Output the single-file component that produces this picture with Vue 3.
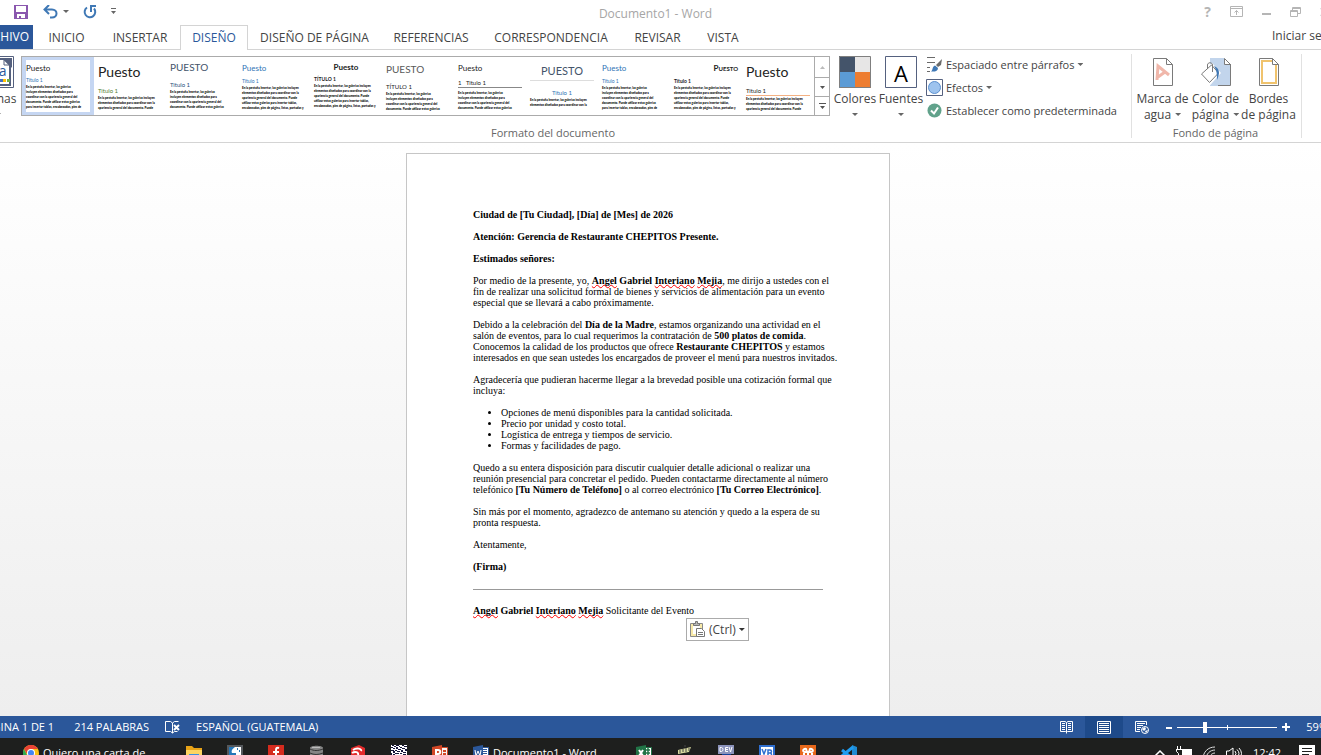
<script setup>
import { ref } from 'vue'

const tabs = ['INICIO', 'INSERTAR', 'DISEÑO', 'DISEÑO DE PÁGINA', 'REFERENCIAS', 'CORRESPONDENCIA', 'REVISAR', 'VISTA']
const activeTab = ref('DISEÑO')
const zoom = ref(27)

const wide = [
  'En la pestaña Insertar, las galerías',
  'incluyen elementos diseñados para',
  'coordinar con la apariencia general del',
  'documento. Puede utilizar estas galerías',
  'para insertar tablas, encabezados, pies de',
]
const loose = [
  'En la pestaña Insertar, las galerías incluyen',
  'elementos diseñados para coordinar con la',
  'apariencia general del documento. Puede',
  'utilizar estas galerías para insertar tablas,',
  'encabezados, pies de página, listas, portadas y',
]
const styleSets = [
  { id: 'a', title: 'Puesto', heading: 'Título 1', lines: wide },
  { id: 'b', title: 'Puesto', heading: 'Título 1', lines: loose.slice(0, 3) },
  { id: 'c', title: 'PUESTO', heading: 'Título 1', lines: wide.slice(0, 4) },
  { id: 'd', title: 'Puesto', heading: 'Título 1', lines: loose },
  { id: 'e', title: 'Puesto', heading: 'TÍTULO 1', lines: loose },
  { id: 'f', title: 'PUESTO', heading: 'TÍTULO 1', lines: wide.slice(0, 4) },
  { id: 'g', title: 'Puesto', heading: '1   Título 1', lines: wide.slice(0, 4) },
  { id: 'h', title: 'PUESTO', heading: 'Título 1', lines: loose.slice(0, 2) },
  { id: 'i', title: 'Puesto', heading: 'Título 1', lines: wide },
  { id: 'j', title: 'Puesto', heading: 'Título 1', lines: loose },
  { id: 'k', title: 'Puesto', heading: 'Título 1', lines: loose.slice(0, 3) },
]
const selectedSet = ref('a')
</script>

<template>
  <div class="app">
    <header class="titlebar">
      <div class="quick">
        <button class="ico" aria-label="Guardar">
          <svg width="14" height="14" viewBox="0 0 14 14"><path fill="#8a57ae" fill-rule="evenodd" d="M0 0h14v14H0zM2 1v6h10V1zM3 9v4h2v-2h2v2h4V9z" /></svg>
        </button>
        <button class="ico undo" aria-label="Deshacer">
          <svg width="15" height="14" viewBox="0 0 15 14"><path fill="none" stroke="#3f78b5" stroke-width="2" d="M6 0 1.500 4.500 6 9M2 4.500h7c6 0 6 8 0 8H7" /></svg>
        </button>
        <button class="ico" aria-label="Opciones de deshacer"><span class="caret"></span></button>
        <button class="ico redo" aria-label="Repetir">
          <svg width="14" height="14" viewBox="0 0 14 14"><path fill="none" stroke="#3f78b5" stroke-width="2" d="M4 2.500A5.300 5.300 0 1 0 11 3.500M7 1h6M8 0v7" /></svg>
        </button>
        <button class="ico custom" aria-label="Personalizar">
          <svg width="7" height="7" viewBox="0 0 7 7"><path fill="#666" d="M1 0h5v1H1zM1 3h5L3.500 6z" /></svg>
        </button>
      </div>
      <div class="doc-title">Documento1 - Word</div>
      <div class="window-tools">
        <button class="ico help" aria-label="Ayuda">?</button>
        <button class="ico" aria-label="Opciones de la cinta">
          <svg width="13" height="11" viewBox="0 0 13 11"><path fill="none" stroke="#b5b5b5" d="M.5.5h12v10H.5zM.5 2.500h12M6.500 9V4.500M4.500 6.500l2-2 2 2" /></svg>
        </button>
        <button class="ico" aria-label="Minimizar"><svg width="9" height="10" viewBox="0 0 9 10"><path fill="#b5b5b5" d="M0 6h9v2H0z" /></svg></button>
        <button class="ico" aria-label="Restaurar">
          <svg width="11" height="10" viewBox="0 0 11 10"><path fill="none" stroke="#b5b5b5" d="M.5 3.500h7v6h-7zM2.500 3V.5h8v6H8M.5 4.500h7M2.500 1.500h8" /></svg>
        </button>
        <button class="ico" aria-label="Cerrar"><svg width="10" height="10" viewBox="0 0 10 10"><path stroke="#b5b5b5" stroke-width="2" d="m1 1 8 8M9 1 1 9" /></svg></button>
      </div>
    </header>

    <nav class="tabs">
      <button class="tab file">ARCHIVO</button>
      <button v-for="t in tabs" :key="t" class="tab" :class="{ active: t === activeTab }" @click="activeTab = t">{{ t }}</button>
      <a class="signin" href="#">Iniciar sesión</a>
    </nav>

    <section class="ribbon">
      <div class="group format">
        <div class="group-body">
          <button class="big themes">
            <svg width="32" height="32" viewBox="0 0 32 32">
              <path fill="#fff" stroke="#55617f" stroke-width="1" d="M.5.5h31v31H.5z" />
              <path fill="#55617f" d="M21 2h9v10z" />
              <path fill="#fff" stroke="#55617f" stroke-width="2" d="M3 3h19l6 6v20H3z" />
              <path fill="none" stroke="#55617f" d="M22 3v6h6" />
              <path fill="#5b9bd5" d="M14 23h3v3h-3z" /><path fill="#4472c4" d="M18 23h3v3h-3z" /><path fill="#ffc000" d="M21 23h3v3h-3z" /><path fill="#70ad47" d="M25 23h3v3h-3z" />
              <text x="8" y="20" class="svg-aa">Aa</text>
            </svg>
            <span>Temas</span><i class="caret"></i>
          </button>
          <div class="gallery">
            <button v-for="s in styleSets" :key="s.id" class="thumb" :class="['set-' + s.id, { selected: s.id === selectedSet }]" @click="selectedSet = s.id">
              <span class="sheet">
                <b class="t">{{ s.title }}</b>
                <b class="h">{{ s.heading }}</b>
                <span class="p"><span v-for="l in s.lines" :key="l">{{ l }}</span></span>
              </span>
            </button>
            <div class="scroller">
              <button class="off" aria-label="Arriba"><svg width="5" height="3"><path d="M0 3h5L2.500 0z" /></svg></button>
              <button aria-label="Abajo"><svg width="5" height="3"><path d="M0 0h5L2.500 3z" /></svg></button>
              <button aria-label="Más"><svg width="7" height="7"><path d="M0 0h7v1H0zM1 3h5L3.500 6z" /></svg></button>
            </div>
          </div>
          <button class="big colors">
            <svg width="32" height="32" viewBox="0 0 32 32"><path fill="#44546a" d="M0 0h16v16H0z" /><path fill="#e7e6e6" d="M16 0h16v16H16z" /><path fill="#5b9bd5" d="M0 16h16v16H0z" /><path fill="#ed7d31" d="M16 16h16v16H16z" /><path fill="none" stroke="#7f7f7f" d="M.5.5h31v31H.5z" /></svg>
            <span>Colores</span><i class="caret"></i>
          </button>
          <button class="big fonts">
            <svg width="32" height="32" viewBox="0 0 32 32"><path fill="#fff" stroke="#55617f" d="M.5.5h31v31H.5z" /><text x="16" y="26" text-anchor="middle" class="svg-a">A</text></svg>
            <span>Fuentes</span><i class="caret"></i>
          </button>
          <div class="small-list">
            <button class="small">
              <svg width="17" height="17" viewBox="0 0 17 17"><path stroke="#6a6a6a" d="M1 1.500h8M1 6.500h8M1 11.500h3M1 15.500h3" /><path fill="#6b6b6b" d="m16 3-1 6-3 2-2-2z" /><path fill="#3f78b5" d="M9 9.500 12 12c0 3-3 4-7 3.500 2-1 1-5 4-6z" /></svg>
              Espaciado entre párrafos<i class="caret"></i>
            </button>
            <button class="small">
              <svg width="17" height="17" viewBox="0 0 17 17"><path fill="#fff" stroke="#55617f" d="M.5.5h16v16H.5z" /><circle cx="8.500" cy="8.500" r="6" fill="#9dc3ee" stroke="#5b8fce" /></svg>
              Efectos<i class="caret"></i>
            </button>
            <button class="small">
              <svg width="17" height="17" viewBox="0 0 17 17"><circle cx="8.500" cy="8.500" r="7" fill="#61a28b" /><path fill="none" stroke="#fff" stroke-width="2" d="m5 8.500 3 3 4-6" /></svg>
              Establecer como predeterminada
            </button>
          </div>
        </div>
        <div class="group-label">Formato del documento</div>
      </div>
      <div class="group background">
        <div class="group-body">
          <button class="big page">
            <svg width="24" height="30" viewBox="0 0 24 30"><path fill="#fff" stroke="#7a7a7a" d="M2.500 1.500h13l6 6v21h-19zM15.500 1.500v6h6" /><path fill="none" stroke="#f0b7aa" stroke-width="3" d="M6 23 7 9l11 9M7 20l7-5" /></svg>
            <span>Marca de</span><span>agua<i class="caret"></i></span>
          </button>
          <button class="big page">
            <svg width="32" height="30" viewBox="0 0 32 30"><path fill="#c2d5ec" d="M10 1h14l6 6v22H10z" /><path fill="#fff" stroke="#7a7a7a" d="M24.500 1.500v6h6z" /><path fill="none" stroke="#7a7a7a" d="M30.500 7v21.500H18" /><path fill="#fff" stroke="#fff" stroke-width="3" d="m1 17 11-9 7 8-9 10z" /><path fill="#fff" stroke="#7a7a7a" d="m1.500 17 10-9 7 8-9 9.500z" /><path fill="none" stroke="#7a7a7a" d="M7.500 12V8c0-3 5-3 5 0v7" /><path fill="#3f78b5" d="M14 9c6 2 6 8 3 14 0-6 0-9-3-14z" /></svg>
            <span>Color de</span><span>página<i class="caret"></i></span>
          </button>
          <button class="big page">
            <svg width="24" height="30" viewBox="0 0 24 30"><path fill="#fff" stroke="#7a7a7a" d="M2.500 1.500h13l6 6v21h-19z" /><path fill="none" stroke="#f0c36d" stroke-width="2" d="M5 4h11l3 4v18H5z" /><path fill="#fff" stroke="#7a7a7a" d="M15.500 1.500v6h6z" /></svg>
            <span>Bordes</span><span>de página</span>
          </button>
        </div>
        <div class="group-label">Fondo de página</div>
      </div>
    </section>

    <main class="canvas">
      <article class="page-sheet">
        <p><b>Ciudad de [Tu Ciudad], [Día] de [Mes] de 2026</b></p>
        <p><b>Atención: Gerencia de Restaurante CHEPITOS Presente.</b></p>
        <p><b>Estimados señores:</b></p>
        <p>Por medio de la presente, yo, <b><u>Angel</u> Gabriel <u>Interiano</u> <u>Mejia</u></b>, me dirijo a ustedes con el<br>fin de realizar una solicitud formal de bienes y servicios de alimentación para un evento<br>especial que se llevará a cabo próximamente.</p>
        <p>Debido a la celebración del <b>Día de la Madre</b>, estamos organizando una actividad en el<br>salón de eventos, para lo cual requerimos la contratación de <b>500 platos de comida</b>.<br>Conocemos la calidad de los productos que ofrece <b>Restaurante CHEPITOS</b> y estamos<br>interesados en que sean ustedes los encargados de proveer el menú para nuestros invitados.</p>
        <p>Agradecería que pudieran hacerme llegar a la brevedad posible una cotización formal que<br>incluya:</p>
        <ul>
          <li>Opciones de menú disponibles para la cantidad solicitada.</li>
          <li>Precio por unidad y costo total.</li>
          <li>Logística de entrega y tiempos de servicio.</li>
          <li>Formas y facilidades de pago.</li>
        </ul>
        <p>Quedo a su entera disposición para discutir cualquier detalle adicional o realizar una<br>reunión presencial para concretar el pedido. Pueden contactarme directamente al número<br>telefónico <b>[Tu Número de Teléfono]</b> o al correo electrónico <b>[Tu Correo Electrónico]</b>.</p>
        <p>Sin más por el momento, agradezco de antemano su atención y quedo a la espera de su<br>pronta respuesta.</p>
        <p>Atentamente,</p>
        <p><b>(Firma)</b></p>
        <hr>
        <p><b><u>Angel</u> Gabriel <u>Interiano</u> <u>Mejia</u></b> Solicitante del Evento</p>
        <button class="paste">
          <svg width="16" height="17" viewBox="0 0 16 17"><path fill="#f7e9a8" stroke="#8a8a8a" d="M.5 2.500h12v13H.5z" /><path fill="#fff" d="M3 5h7v8H3z" /><path fill="#b9b9b9" stroke="#777" d="M3.500 4.500v-2h2v-2h2v2h2v2z" /><path fill="#fff" stroke="#777" d="M6.500 7.500h5l3 3v5h-8zM8 11.500h5M8 13.500h5" /></svg>
          (Ctrl)<i class="caret dark"></i>
        </button>
      </article>
    </main>

    <footer class="status">
      <div class="status-left">
        <button class="st page-no">PÁGINA 1 DE 1</button>
        <button class="st words">214 PALABRAS</button>
        <button class="st proof" aria-label="Revisión">
          <svg width="15" height="13" viewBox="0 0 15 13"><path fill="none" stroke="#fff" d="M7.500 12V2L5.500.5h-5v10h5l2 1.500 2-1.500h3M7.500 2l2-1.500h4" /><path stroke="#fff" stroke-width="2" d="m9 4 5 5M14 4 9 9" /></svg>
        </button>
        <button class="st">ESPAÑOL (GUATEMALA)</button>
      </div>
      <div class="status-right">
        <button class="view" aria-label="Modo de lectura"><svg width="13" height="13" viewBox="0 0 13 13"><path fill="none" stroke="#fff" d="M6.500 12.500V2L5.500.5h-5v10h5l1 1 1-1h5V.5h-5L6.500 2M2 2.500h3M2 4.500h3M2 6.500h3M2 8.500h3M8 2.500h3M8 4.500h3M8 6.500h3M8 8.500h3" /></svg></button>
        <button class="view on" aria-label="Diseño de impresión"><svg width="14" height="13" viewBox="0 0 14 13"><path fill="none" stroke="#fff" d="M.5.5h13v12H.5zM2 2.500h10M2 4.500h10M2 6.500h10M2 8.500h10M2 10.500h10" /></svg></button>
        <button class="view" aria-label="Diseño web"><svg width="14" height="13" viewBox="0 0 14 13"><path fill="none" stroke="#fff" d="M5 10.500H.5V.5h11V4M2 2.500h8M2 4.500h6M2 6.500h4M2 8.500h3" /><circle cx="10" cy="9" r="3.500" fill="#2b579a" stroke="#fff" /><path fill="#fff" d="m7 8 3-2 1 2-2 2zM10 10l3-1-2 3z" /></svg></button>
        <button class="zoom-step" aria-label="Alejar"><svg width="7" height="7"><path fill="#fff" d="M0 3h6v2H0z" /></svg></button>
        <input v-model="zoom" class="slider" type="range" min="0" max="100" aria-label="Zoom">
        <button class="zoom-step" aria-label="Acercar"><svg width="8" height="8"><path fill="#fff" d="M3 0h2v3h3v2H5v3H3V5H0V3h3z" /></svg></button>
        <button class="st percent">59%</button>
      </div>
    </footer>

    <div class="taskbar">
      <div class="task-row">
        <button class="task chrome">
          <svg width="16" height="16" viewBox="0 0 16 16"><circle cx="8" cy="8" r="8" fill="#fbc116" /><path fill="#ea4335" d="M1 4a8 8 0 0 1 14 0H8a4 4 0 0 0-4 5z" /><path fill="#34a853" d="M1 4a8 8 0 0 0 6 12l4-6-7 0z" /><circle cx="8" cy="8" r="4" fill="#fff" /><circle cx="8" cy="8" r="3" fill="#4285f4" /></svg>
          Quiero una carta de
        </button>
        <button class="task" aria-label="Explorador"><svg width="16" height="16"><path fill="#e8a317" d="M0 1h6l2 2h8v4H0z" /><path fill="#fcd462" d="M0 5h16v11H0z" /><path fill="#3b8ede" d="M3 9h10v7H3z" /></svg></button>
        <button class="task" aria-label="Imagen"><svg width="16" height="16"><path fill="#55585c" d="M0 0h16v16H0z" /><path fill="#fff" d="M2 2h12v12H2z" /><path fill="#2677b8" d="M2 2h6C5 4 4 6 5 8h4v6H2zM10 3h1v2h-1zM12 5h1v2h-1z" /></svg></button>
        <button class="task" aria-label="Flash"><svg width="16" height="16"><path fill="#d52b1e" d="M0 0h16v16H0z" /><path fill="none" stroke="#fff" stroke-width="2" d="M11 3C8 2 8 4 8 6v8M5 7h6" /></svg></button>
        <button class="task" aria-label="Base de datos"><svg width="16" height="16"><path fill="#858585" d="M1 3c0-3 13-3 13 0v12H1z" /><path fill="none" stroke="#333" d="M1 4c4 2 8 2 13 0M1 8c4 2 8 2 13 0" /><path stroke="#bbb" d="M3 2.500h8" /></svg></button>
        <button class="task" aria-label="SketchUp"><svg width="16" height="16"><path fill="#e22b2b" d="m1 3 8-3 6 3v9l-7 4-7-4z" /><path fill="none" stroke="#fff" stroke-width="2" d="M3 5c4-3 9-1 8 1M2 8c3-2 7-1 6 2" /></svg></button>
        <button class="task" aria-label="Código"><svg width="16" height="16"><path fill="#fff" d="M0 0h16v16H0z" /><path fill="#16163a" d="M1 0h2v1H1zM5 0h3v1H5zM11 0h2v1h-2zM3 1h2v1H3zM8 1h1v1H8zM13 1h3v1h-3zM0 2h2v1H0zM5 2h2v2H5zM9 2h2v1H9zM2 3h2v1H2zM11 3h3v1h-3zM7 4h3v1H7zM0 5h3v1H0zM4 5h2v1H4zM10 5h2v2h-2zM14 4h2v2h-2zM2 6h2v2H2zM6 6h3v1H6zM12 7h3v1h-3zM0 8h1v2H0zM4 8h4v1H4zM9 8h2v1H9zM2 9h2v1H2zM12 9h3v2h-3z" /></svg></button>
        <button class="task" aria-label="PowerPoint"><svg width="16" height="16"><path fill="#f5f5f5" stroke="#d24726" d="M8 2.500h7.500v11H8z" /><path fill="#d24726" d="m0 2 10-2v16L0 14zM11 5h3v2h-3zM11 8h3v2h-3z" /><path fill="none" stroke="#fff" stroke-width="2" d="M4 12V5h2c3 0 3 4 0 4H4" /></svg></button>
        <button class="task word">
          <svg width="16" height="16"><path fill="#fff" stroke="#2b579a" d="M8 2.500h7.500v11H8z" /><path fill="#2b579a" d="m0 2 10-2v16L0 14z" /><path stroke="#2b579a" d="M10 4.500h4M10 6.500h4M10 8.500h4M10 10.500h4" /><path fill="none" stroke="#fff" d="m2 5 1 6L5 6l2 5 1-6" /></svg>
          Documento1 - Word
        </button>
        <button class="task" aria-label="Excel"><svg width="16" height="16"><path fill="#fff" stroke="#217346" d="M8 2.500h7.500v11H8z" /><path fill="#217346" d="m0 2 10-2v16L0 14z" /><path stroke="#217346" stroke-width="1.500" d="M10 5h4M10 8h4M10 11h4M12 3v10" /><path stroke="#fff" stroke-width="2" d="m3 5 4 6M7 5l-4 6" /></svg></button>
        <button class="task" aria-label="Editor"><svg width="16" height="16"><path fill="#d9dba0" d="m1 5 13-3-2 5-11 2z" /><path stroke="#444" d="M3 5v3M6 4v3M9 3v4M12 3v3M8 0v2" /><path fill="#7f8250" d="M3 10h9v3H3z" /></svg></button>
        <button class="task" aria-label="Dev"><svg width="16" height="16"><path fill="#8c93bb" d="M0 0h16v9H0z" /><path fill="#16439c" d="M4 9h9v7H4z" /><path fill="none" stroke="#fff" d="M2 2.500v4h1.500c2 0 2-4 0-4zM10 2.500H7.500v4H10M7.500 4.500H10M11 2l1.500 5L14 2" /></svg></button>
        <button class="task" aria-label="Visual Basic"><svg width="16" height="16"><path fill="#fff" stroke="#2f6fd0" stroke-width="2" d="M1 1h14v14H1z" /><path fill="none" stroke="#2f6fd0" stroke-width="1.500" d="m3 4 2 5 2-5M9 5v6h2c2 0 2-3 0-3H9h2c2 0 2-3 0-3z" /></svg></button>
        <button class="task" aria-label="XAMPP"><svg width="16" height="16"><path fill="#e8681a" d="M0 0h16v16H0z" /><path fill="none" stroke="#fff" stroke-width="2" d="M5 7C2 7 3 3 6 4l1 3h2l1-3c3-1 4 3 1 3H5M4 8v5M12 8v5M8 8v4" /></svg></button>
        <button class="task" aria-label="Visual Studio Code"><svg width="16" height="16"><path fill="#1f8ad2" d="m11 0 5 2v12l-5 2z" /><path fill="none" stroke="#1f9cf0" stroke-width="3" d="M12 2 1 11M1 5l11 9" /></svg></button>
        <div class="tray">
          <button class="tr" aria-label="Iconos ocultos"><svg width="12" height="8"><path fill="none" stroke="#fff" stroke-width="1.500" d="m1 7 5-5 5 5" /></svg></button>
          <button class="tr" aria-label="Batería"><svg width="16" height="14"><path fill="#fff" d="M6 3h10v9H4V9h2z" /><path fill="none" stroke="#fff" d="M1.500 0v3M4.500 0v3M0 3.500h6M.5 3.500v2l2 2v4h3" /></svg></button>
          <button class="tr" aria-label="Red"><svg width="14" height="14"><path fill="none" stroke="#ddd" d="M1 13C1 6 6 1 13 1M4 13c0-5 4-9 9-9M7 13c0-3 3-6 6-6" /></svg></button>
          <button class="tr" aria-label="Volumen"><svg width="17" height="14"><path fill="none" stroke="#fff" d="M.5 5v5H3l4 3V2L3 5zM9 5q2 2.500 0 5M11 3.500q4 4 0 8M13 2q5 5.500 0 11" /></svg></button>
          <span class="clock">12:42</span>
          <button class="tr" aria-label="Notificaciones"><svg width="16" height="16"><path fill="#fff" d="M0 0h16v13h-5l-3 3v-3H0z" /><path stroke="#1e1f1e" d="M3 3.500h10M3 6.500h10M3 9.500h7" /></svg></button>
        </div>
      </div>
    </div>
  </div>
</template>

<style>
html, body, #app { height: 100%; }
body { margin: 0; overflow: hidden; }
</style>

<style scoped>
.app { height: 100%; display: flex; flex-direction: column; overflow: hidden; background: #fff; color: #444; font: 12px/16px "Open Sans", "Noto Sans", sans-serif; white-space: nowrap; }
button { font: inherit; color: inherit; background: none; border: 0; padding: 0; margin: 0; }
svg { display: block; flex: none; }
.caret { display: inline-block; flex: none; width: 6px; height: 3px; background: #666; clip-path: polygon(0 0, 100% 0, 50% 100%); }
.caret.dark { background: #333; }

.titlebar { flex: none; box-sizing: border-box; height: 25px; display: grid; grid-template-columns: 1fr auto 1fr; align-items: center; padding: 0 24px 2px 14px; }
.quick { display: flex; align-items: center; }
.ico { display: flex; align-items: center; justify-content: center; }
.undo { margin: 0 5px 0 15px; }
.redo { margin: 0 13px 0 14px; }
.doc-title { color: #a6a6a6; padding-top: 4px; }
.window-tools { display: flex; align-items: center; justify-content: flex-end; gap: 19px; margin-right: -33px; }
.help { color: #b5b5b5; font-weight: 700; font-size: 14px; }

.tabs { flex: none; height: 25px; display: grid; grid-template-columns: 33px 67px 80px 68px 133px 100px 140px 73px 58px 1fr; border-bottom: 1px solid #d4d4d4; box-sizing: border-box; }
.tab { display: flex; align-items: center; justify-content: center; box-sizing: border-box; height: 25px; }
.tab.file { justify-content: flex-end; background: #2b579a; color: #fff; padding-right: 4px; overflow: hidden; height: 24px; }
.tab.active { color: #2b579a; background: #fff; border: 1px solid #d4d4d4; border-bottom: 0; }
.signin { justify-self: end; align-self: center; color: #444; text-decoration: none; margin-right: -24px; padding-bottom: 4px; }

.ribbon { flex: none; height: 92px; display: flex; border-bottom: 1px solid #d4d4d4; }
.group { display: flex; flex-direction: column; border-right: 1px solid #e1e1e1; margin: 4px 0; height: 84px; }
.group-body { display: flex; flex: 1; padding-top: 2px; }
.group-label { text-align: center; color: #666; font-size: 11px; line-height: 10px; }
.format { margin-left: -27px; padding-left: 2px; width: 1156px; }
.background { padding: 0 6px 0 4px; }
.big { display: flex; flex-direction: column; align-items: center; width: 46px; flex: none; }
.big svg { margin-bottom: 3px; }
.big > .caret { margin-top: 6px; }
.big span .caret { margin: 0 0 3px 4px; }
.page { width: 53px; }
.page svg { margin: 1px 0 4px; }
.gallery { display: flex; height: 58px; border: 1px solid #ababab; background: #fff; margin-right: 2px; }
.thumb { width: 72px; text-align: left; border: 3px solid transparent; border-left-width: 4px; border-right-width: 4px; }
.thumb.selected { border-color: #c5d6f2; }
.sheet { display: flex; flex-direction: column; height: 50px; color: #222; font-family: Lato, sans-serif; }
.sheet b { font-weight: 400; flex: none; }
.t { font-size: 8px; line-height: 14px; }
.h { font-size: 5px; line-height: 8px; margin-top: 2px; white-space: pre; }
.p { display: flex; flex-direction: column; font-size: 3px; line-height: 5px; font-weight: 900; color: #000; margin-top: 1px; }
.set-a .h, .set-d .h, .set-i .h { color: #2e74b5; }
.set-a .h { margin-top: 1px; }
.set-b .t, .set-k .t { font-size: 14px; line-height: 22px; }
.set-b .h, .set-k .h { font-size: 6px; margin-top: 4px; }
.set-b .h { color: #538135; }
.set-c .t { font-size: 10px; line-height: 12px; color: #44546a; }
.set-c .h { font-size: 6px; margin-top: 8px; color: #1f4e79; }
.set-d .t, .set-i .t { color: #2e74b5; }
.set-e .t { text-align: center; line-height: 12px; }
.set-e .sheet b, .set-j .sheet b { font-weight: 700; }
.set-f .t { font-size: 10px; line-height: 16px; color: #595959; }
.set-f .h { font-size: 6px; margin-top: 6px; }
.set-g .h { margin-top: 4px; border-bottom: 1px solid #888; font-size: 6px; }
.set-g .p { margin-top: 3px; }
.set-h .t { font-size: 11px; line-height: 19px; border-bottom: 1px solid #ddd; text-align: center; color: #44546a; }
.set-h .h { font-size: 6px; text-align: center; margin-top: 8px; color: #2e74b5; }
.set-j .t { text-align: right; font-variant: small-caps; }
.set-k .h { border-bottom: 1px solid #f4b183; }
.scroller { display: grid; grid-template-rows: 20px 19px 19px; width: 14px; border-left: 1px solid #ababab; }
.scroller button { display: flex; align-items: center; justify-content: center; fill: #555; }
.scroller button + button { border-top: 1px solid #ababab; }
.scroller .off { fill: #bbb; }
.small-list { display: flex; flex-direction: column; margin: -3px 0 0 2px; font-size: 11px; }
.small { display: flex; align-items: center; height: 23px; gap: 3px; }

.canvas { flex: 1; min-height: 0; overflow: hidden; display: flex; justify-content: center; align-items: flex-start; padding: 10px 25px 0 0; background: linear-gradient(#fff, #eee); }
.page-sheet { position: relative; flex: none; width: 350px; min-height: 600px; padding: 55px 66px; background: #fff; border: 1px solid #c6c6c6; color: #000; font: 10px/11px "Liberation Serif", "Times New Roman", serif; }
.page-sheet p, .page-sheet ul { margin: 0 0 11px; }
.page-sheet ul { padding-left: 28px; }
.page-sheet hr { border: 0; border-top: 1px solid #999; margin: 17px 0 15px; }
.page-sheet u { text-decoration: underline wavy #f00 1px; text-underline-offset: 0; text-decoration-skip-ink: none; }
.paste { position: absolute; left: 279px; top: 464px; display: flex; align-items: center; gap: 3px; height: 23px; padding: 0 3px; border: 1px solid #ababab; background: #fff; color: #444; font: 12px/16px "Open Sans", "Noto Sans", sans-serif; }

.status { flex: none; height: 22px; display: flex; justify-content: space-between; background: #2b579a; color: #fff; font-size: 11px; }
.status-left, .status-right { display: flex; align-items: center; }
.status-left { margin-left: -21px; }
.words { margin: 0 16px 0 20px; }
.proof { margin-right: 16px; }
.view { width: 38px; height: 22px; display: flex; align-items: center; justify-content: center; }
.view.on { background: #1e4a8a; }
.status-right { margin-right: -7px; }
.zoom-step { margin-left: 5px; }
.slider { appearance: none; width: 100px; height: 22px; margin: 0 0 0 4px; background: linear-gradient(#fff, #fff) center / 100% 1px no-repeat, linear-gradient(#fff, #fff) center / 1px 5px no-repeat; }
.slider::-webkit-slider-thumb { appearance: none; width: 4px; height: 11px; background: #fff; }
.percent { margin-left: 16px; }

.taskbar { flex: none; height: 17px; overflow: hidden; background: #1e1f1e; color: #fff; }
.task-row { height: 30px; display: flex; align-items: center; padding-left: 23px; }
.task { display: flex; align-items: center; gap: 4px; flex: none; width: 41px; font-size: 11px; }
.task.chrome { width: 163px; }
.task.word { width: 163px; }
.tray { margin-left: auto; display: flex; align-items: center; gap: 10px; padding-right: 6px; font-size: 11px; }
.clock { margin-right: 8px; }
.svg-aa { font: 14px "Open Sans", sans-serif; fill: #2b579a; }
.svg-a { font: 22px "Open Sans", sans-serif; fill: #000; }
</style>
